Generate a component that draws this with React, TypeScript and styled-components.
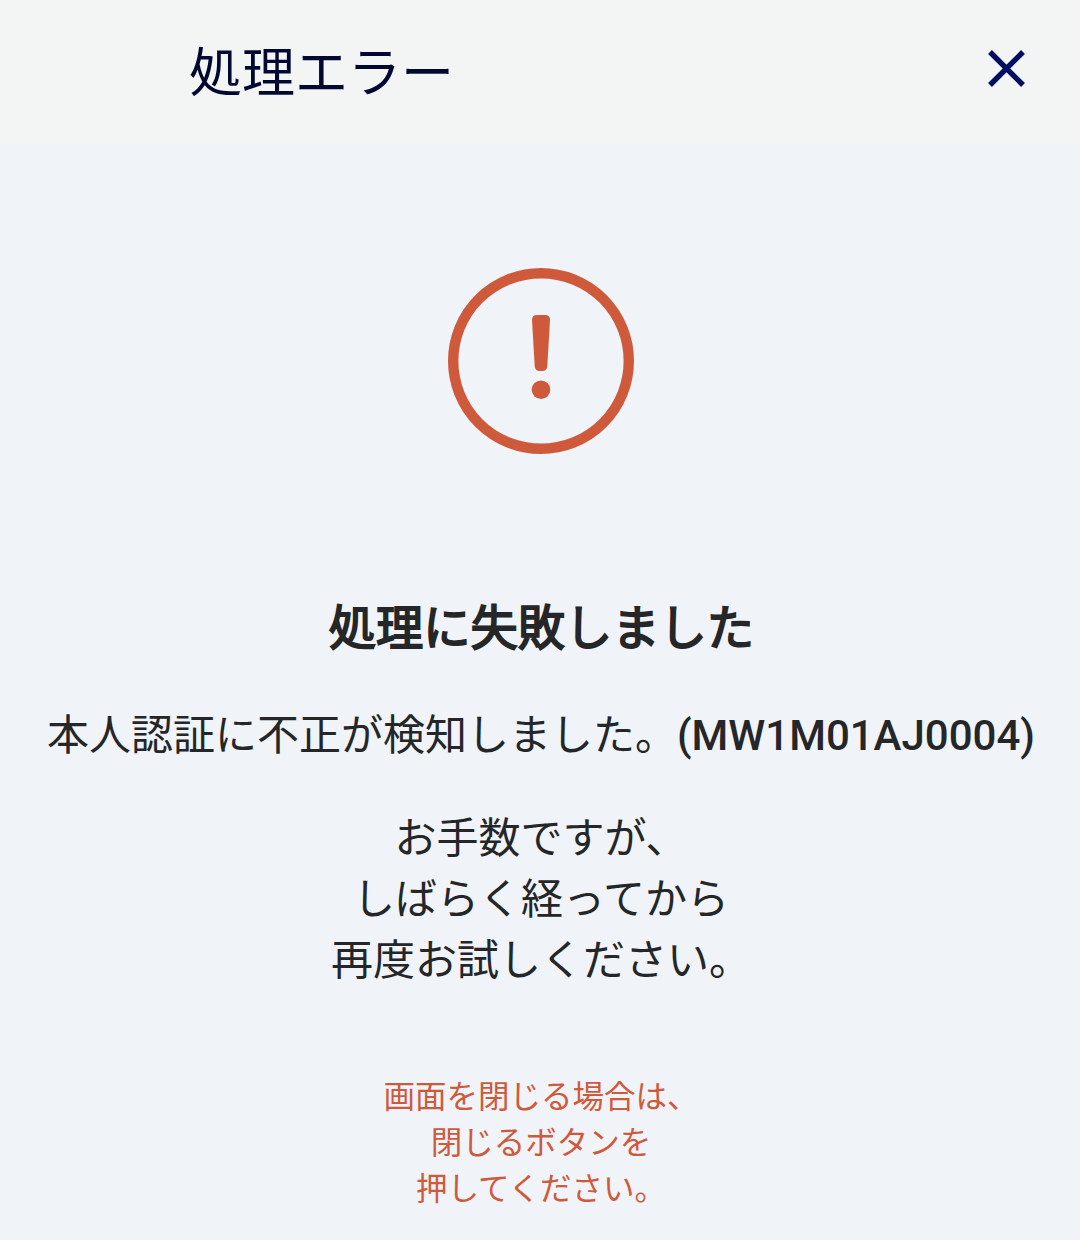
import React from "react";
import styled, { createGlobalStyle } from "styled-components";

const Global = createGlobalStyle`
  * { box-sizing: border-box; }
  body { margin: 0; background: #f0f3f8; }
`;
const Screen = styled.div`
  width: 1080px;
  height: 1240px;
  overflow: hidden;
  background: #f0f3f8;
  color: #242628;
  font-family: Roboto, "Noto Sans CJK JP", sans-serif;
`;
const Header = styled.header`
  display: flex;
  align-items: center;
  justify-content: space-between;
  height: 144px;
  padding: 0 48px 0 189px;
  background: #f3f5f5;
`;
const Title = styled.h1`
  margin: 4px 0 0;
  font-size: 53px;
  font-weight: 400;
  line-height: 80px;
  color: #000832;
`;
const CloseButton = styled.button`
  display: flex;
  padding: 0;
  border: 0;
  margin: -6px 0 0;
  background: none;
  color: #00105f;
`;
const Content = styled.main`
  display: flex;
  flex-direction: column;
  align-items: center;
  padding: 124px 0 0 2px;
  text-align: center;
  white-space: nowrap;
`;
const Heading = styled.h2`
  margin: 139px 0 0;
  padding-left: 1px;
  font-size: 47.25px;
  font-weight: 400;
  line-height: 72px;
  -webkit-text-stroke: 1.8px currentColor;
`;
const Detail = styled.p`
  margin: 40px 0 0;
  font-size: 42px;
  line-height: 62px;
`;
const Code = styled.span`
  font-weight: 500;
`;
const Message = styled.p`
  margin: 41px 0 0;
  font-size: 42px;
  line-height: 61px;
`;
const Note = styled.p`
  margin: 84px 0 0;
  font-size: 31.5px;
  line-height: 46px;
  color: #cf5a3b;
`;

export default function App() {
  return (
    <Screen>
      <Global />
      <Header>
        <Title>処理エラー</Title>
        <CloseButton aria-label="閉じる">
          <svg width="70" height="44" viewBox="0 0 70 44">
            <path d="M28 5 61 38M61 5 28 38" fill="none" stroke="currentColor" strokeWidth="5.400" />
          </svg>
        </CloseButton>
      </Header>
      <Content>
        <svg width="186" height="186" viewBox="0 0 186 186">
          <circle cx="93" cy="93" r="87.8" fill="none" stroke="#cf5a3b" strokeWidth="10.4" />
          <path d="M89 47h8q5 0 5 5l-2.700 46q-.3 5-5 5h-2.600q-4.700 0-5-5L84 52q0-5 5-5Z" fill="#cf5a3b" />
          <circle cx="93" cy="121.700" r="9.300" fill="#cf5a3b" />
        </svg>
        <Heading>処理に失敗しました</Heading>
        <Detail>本人認証に不正が検知しました。<Code>(MW1M01AJ0004)</Code></Detail>
        <Message>お手数ですが、<br />しばらく経ってから<br />再度お試しください。</Message>
        <Note>画面を閉じる場合は、<br />閉じるボタンを<br />押してください。</Note>
      </Content>
    </Screen>
  );
}
